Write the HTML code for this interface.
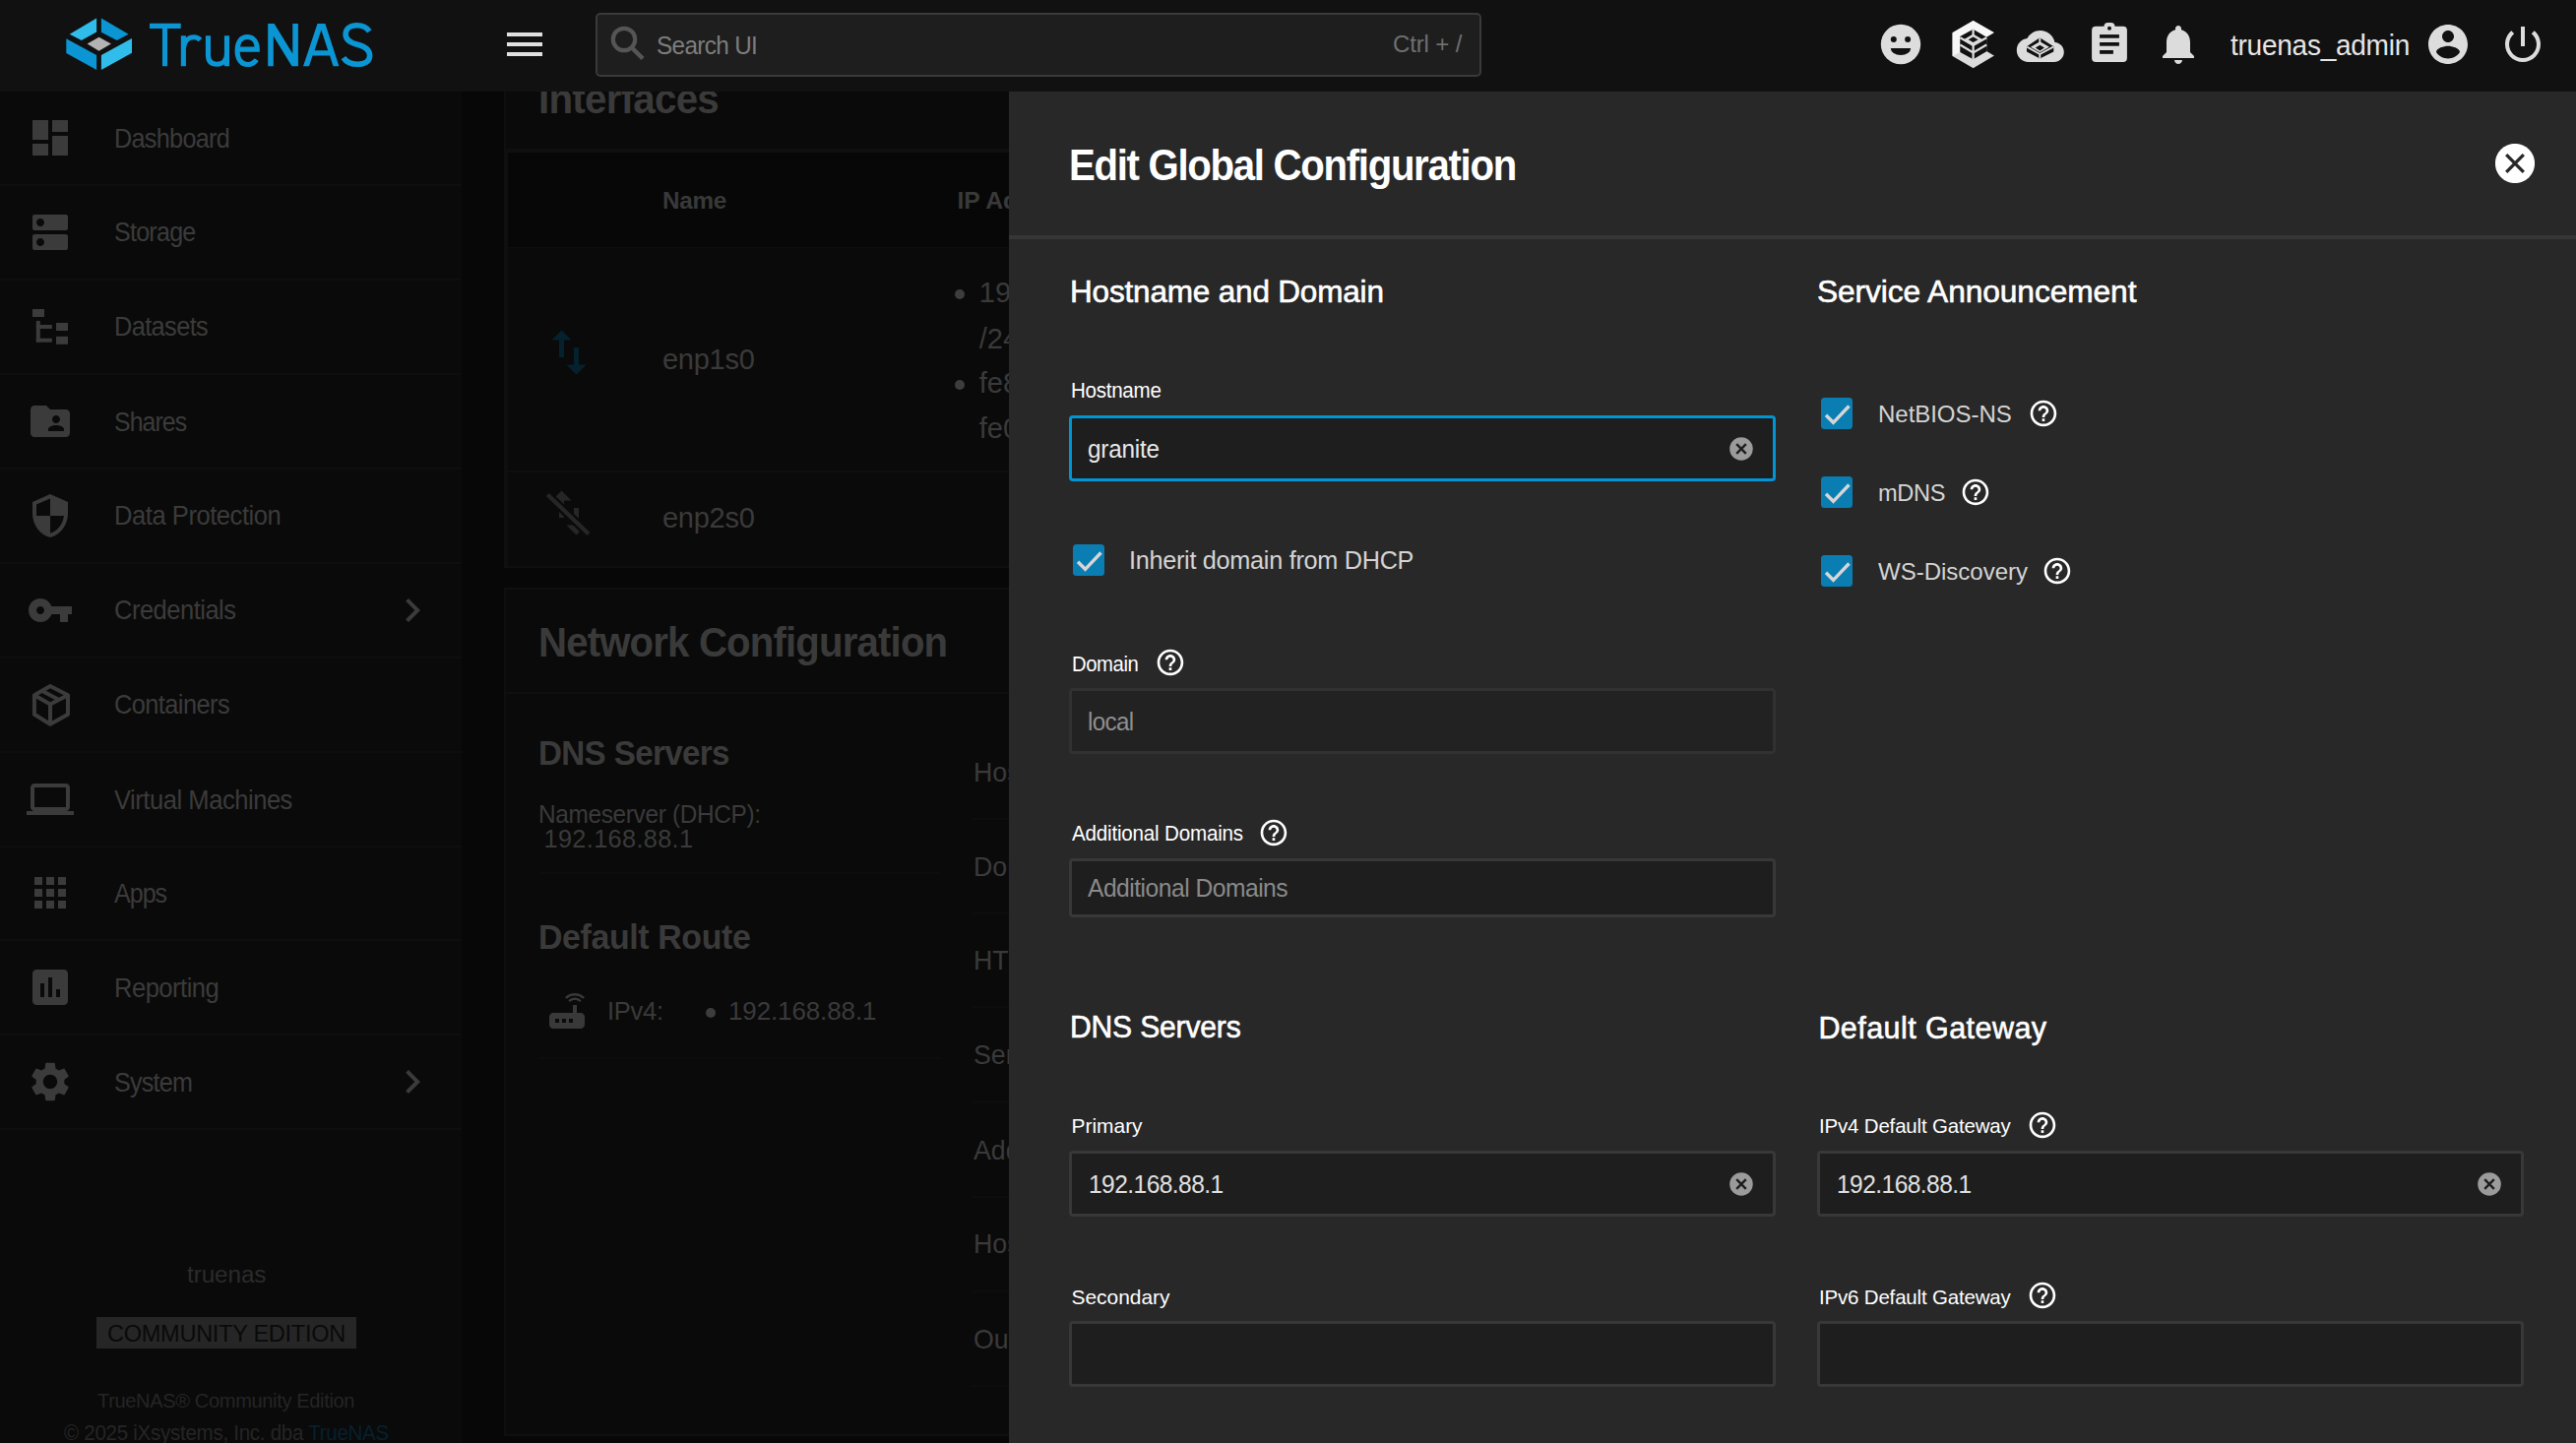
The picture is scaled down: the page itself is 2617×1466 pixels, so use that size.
<!DOCTYPE html><html><head><meta charset='utf-8'><title>TrueNAS</title><style>
html,body{margin:0;padding:0;}
body{width:2617px;height:1466px;overflow:hidden;position:relative;background:#070707;font-family:"Liberation Sans",sans-serif;}
.a{position:absolute;}
.t{position:absolute;white-space:nowrap;font-family:"Liberation Sans",sans-serif;}
.med{-webkit-text-stroke:0.6px currentColor;}
.logo{font-family:"Liberation Sans",sans-serif;color:#0b95d3;font-size:62px;line-height:62px;white-space:nowrap;}
.logo .tr{letter-spacing:-2px;}
.logo .nas{font-weight:bold;letter-spacing:-3px;margin-left:6px;}
</style></head><body><div class='a' style='left:469px;top:93px;width:556px;height:1373px;background:#070707;'></div>
<div class='a' style='left:512px;top:-100px;width:600px;height:677px;background:#0a0a0a;box-sizing:border-box;border:2px solid #0f0f0f;'></div>
<div class='a' style='left:514px;top:151px;width:600px;height:4px;background:#0f0f0f;'></div>
<div class='a' style='left:514px;top:151px;width:2px;height:424px;background:#0f0f0f;'></div>
<div class='a' style='left:516px;top:155px;width:600px;height:96px;background:#070707;'></div>
<div class='a' style='left:516px;top:251px;width:600px;height:1px;background:#0f0f0f;'></div>
<div class='a' style='left:516px;top:478px;width:600px;height:2px;background:#0f0f0f;'></div>
<svg class='a' style='left:547.50px;top:328.30px;width:60.00px;height:60.00px;' viewBox='0 0 24 24'><path fill='#05212d' d='M16 17.01V10h-2v7.01h-3L15 21l4-3.99h-3zM9 3L5 6.99h3V14h2V6.99h3L9 3z'/></svg>
<svg class='a' style='left:547.5px;top:490.5px;width:60px;height:60px' viewBox='0 0 24 24'><path fill='#262626' d='M16 17.01V10h-2v7.01h-3L15 21l4-3.99h-3zM9 3L5 6.99h3V14h2V6.99h3L9 3z'/><path d='M3.3 4.6L20 20.6' stroke='#0a0a0a' stroke-width='3.6'/><path d='M3.3 4.6L20 20.6' stroke='#262626' stroke-width='1.7'/></svg>
<div class='a' style='left:970px;top:293.5px;width:10px;height:10px;border-radius:50%;background:#3d3d3d'></div>
<div class='a' style='left:970px;top:385.5px;width:10px;height:10px;border-radius:50%;background:#3d3d3d'></div>
<div class='a' style='left:512px;top:597px;width:600px;height:862px;background:#0a0a0a;box-sizing:border-box;border:2px solid #0f0f0f;'></div>
<div class='a' style='left:514px;top:703px;width:600px;height:2px;background:#0f0f0f;'></div>
<div class='a' style='left:547px;top:886px;width:408px;height:2px;background:#0d0d0d;'></div>
<div class='a' style='left:547px;top:1074px;width:408px;height:2px;background:#0d0d0d;'></div>
<div class='a' style='left:988px;top:831px;width:100px;height:2px;background:#0d0d0d;'></div>
<div class='a' style='left:988px;top:927px;width:100px;height:2px;background:#0d0d0d;'></div>
<div class='a' style='left:988px;top:1022px;width:100px;height:2px;background:#0d0d0d;'></div>
<div class='a' style='left:988px;top:1119px;width:100px;height:2px;background:#0d0d0d;'></div>
<div class='a' style='left:988px;top:1215px;width:100px;height:2px;background:#0d0d0d;'></div>
<div class='a' style='left:988px;top:1311px;width:100px;height:2px;background:#0d0d0d;'></div>
<div class='a' style='left:988px;top:1407px;width:100px;height:2px;background:#0d0d0d;'></div>
<svg class='a' style='left:552.20px;top:1003.00px;width:48.00px;height:48.00px;' viewBox='0 0 24 24'><path fill='#393939' d='M20.2 5.9l.8-.8C19.6 3.7 17.8 3 16 3s-3.6.7-5 2.1l.8.8C13 4.8 14.5 4.2 16 4.2s3 .6 4.2 1.7zm-.9.8c-.9-.9-2.1-1.4-3.3-1.4s-2.4.5-3.3 1.4l.8.8c.7-.7 1.6-1 2.5-1 .9 0 1.8.3 2.5 1l.8-.8zM19 13h-2V9h-2v4H5c-1.1 0-2 .9-2 2v4c0 1.1.9 2 2 2h14c1.1 0 2-.9 2-2v-4c0-1.1-.9-2-2-2zM8 18H6v-2h2v2zm3.5 0h-2v-2h2v2zm3.5 0h-2v-2h2v2z'/></svg>
<div class='a' style='left:717px;top:1024px;width:10px;height:10px;border-radius:50%;background:#3d3d3d'></div>
<div class='a' style='left:0px;top:93px;width:469px;height:1373px;background:#0a0a0a;'></div>
<div class='a' style='left:0px;top:187px;width:469px;height:2px;background:#0e0e0e;'></div>
<div class='a' style='left:0px;top:283px;width:469px;height:2px;background:#0e0e0e;'></div>
<div class='a' style='left:0px;top:379px;width:469px;height:2px;background:#0e0e0e;'></div>
<div class='a' style='left:0px;top:475px;width:469px;height:2px;background:#0e0e0e;'></div>
<div class='a' style='left:0px;top:571px;width:469px;height:2px;background:#0e0e0e;'></div>
<div class='a' style='left:0px;top:667px;width:469px;height:2px;background:#0e0e0e;'></div>
<div class='a' style='left:0px;top:763px;width:469px;height:2px;background:#0e0e0e;'></div>
<div class='a' style='left:0px;top:859px;width:469px;height:2px;background:#0e0e0e;'></div>
<div class='a' style='left:0px;top:954px;width:469px;height:2px;background:#0e0e0e;'></div>
<div class='a' style='left:0px;top:1050px;width:469px;height:2px;background:#0e0e0e;'></div>
<div class='a' style='left:0px;top:1146px;width:469px;height:2px;background:#0e0e0e;'></div>
<svg class='a' style='left:27.00px;top:116.00px;width:48.00px;height:48.00px;' viewBox='0 0 24 24'><path fill='#3b3b3b' d='M3 13h8V3H3v10zm0 8h8v-6H3v6zm10 0h8V11h-8v10zm0-18v6h8V3h-8z'/></svg>
<svg class='a' style='left:27.00px;top:211.93px;width:48.00px;height:48.00px;' viewBox='0 0 24 24'><path fill='#3b3b3b' d='M20 13H4c-.55 0-1 .45-1 1v6c0 .55.45 1 1 1h16c.55 0 1-.45 1-1v-6c0-.55-.45-1-1-1zM7 19c-1.1 0-2-.9-2-2s.9-2 2-2 2 .9 2 2-.9 2-2 2zM20 3H4c-.55 0-1 .45-1 1v6c0 .55.45 1 1 1h16c.55 0 1-.45 1-1V4c0-.55-.45-1-1-1zM7 9c-1.1 0-2-.9-2-2s.9-2 2-2 2 .9 2 2-.9 2-2 2z'/></svg>
<svg class='a' style='left:27px;top:307.86px;width:48px;height:48px' viewBox='0 0 48 48'><g fill='#3b3b3b'><rect x='6' y='6' width='12' height='8'/><rect x='9.8' y='18' width='4' height='21.5'/><rect x='9.8' y='22' width='16' height='4'/><rect x='9.8' y='35.7' width='16' height='4'/><rect x='30' y='20' width='12' height='8'/><rect x='30' y='33.8' width='12' height='8'/></g></svg>
<svg class='a' style='left:27.00px;top:403.79px;width:48.00px;height:48.00px;' viewBox='0 0 24 24'><path fill='#3b3b3b' d='M20 6h-8l-2-2H4c-1.1 0-1.99.9-1.99 2L2 18c0 1.1.9 2 2 2h16c1.1 0 2-.9 2-2V8c0-1.1-.9-2-2-2zm-5 3c1.1 0 2 .9 2 2s-.9 2-2 2-2-.9-2-2 .9-2 2-2zm4 8h-8v-1c0-1.33 2.67-2 4-2s4 .67 4 2v1z'/></svg>
<svg class='a' style='left:27.00px;top:499.72px;width:48.00px;height:48.00px;' viewBox='0 0 24 24'><path fill='#3b3b3b' d='M12 1L3 5v6c0 5.55 3.84 10.74 9 12 5.160-1.26 9-6.45 9-12V5l-9-4zm0 10.99h7c-.53 4.12-3.28 7.79-7 8.93V12H5V6.3l7-3.11v8.8z'/></svg>
<svg class='a' style='left:27.00px;top:595.65px;width:48.00px;height:48.00px;' viewBox='0 0 24 24'><path fill='#3b3b3b' d='M12.65 10C11.83 7.67 9.61 6 7 6c-3.31 0-6 2.69-6 6s2.69 6 6 6c2.61 0 4.830-1.67 5.65-4H17v4h4v-4h2v-4H12.65zM7 14c-1.1 0-2-.9-2-2s.9-2 2-2 2 .9 2 2-.9 2-2 2z'/></svg>
<svg class='a' style='left:395.30px;top:595.65px;width:48.00px;height:48.00px;' viewBox='0 0 24 24'><path fill='#3b3b3b' d='M10 6L8.59 7.41 13.17 12l-4.58 4.59L10 18l6-6z'/></svg>
<svg class='a' style='left:27px;top:691.58px;width:48px;height:48px' viewBox='0 0 48 48'><g fill='none' stroke='#3b3b3b' stroke-width='4' stroke-linejoin='round'><path d='M24 5L7.9 14.2V33.7L24 43.7L42 33.7V14.2Z'/><path d='M7.9 14.2L24 23.5L42 14.2M24 23.5V43.7M15.5 9.8L33 19'/></g></svg>
<svg class='a' style='left:27.00px;top:787.51px;width:48.00px;height:48.00px;' viewBox='0 0 24 24'><path fill='#3b3b3b' d='M20 18c1.1 0 1.99-.9 1.99-2L22 6c0-1.1-.9-2-2-2H4c-1.1 0-2 .9-2 2v10c0 1.1.9 2 2 2H0v2h24v-2h-4zM4 6h16v10H4V6z'/></svg>
<svg class='a' style='left:27.00px;top:883.44px;width:48.00px;height:48.00px;' viewBox='0 0 24 24'><path fill='#3b3b3b' d='M4 8h4V4H4v4zm6 12h4v-4h-4v4zm-6 0h4v-4H4v4zm0-6h4v-4H4v4zm6 0h4v-4h-4v4zm6-10v4h4V4h-4zm-6 4h4V4h-4v4zm6 6h4v-4h-4v4zm0 6h4v-4h-4v4z'/></svg>
<svg class='a' style='left:27.00px;top:979.37px;width:48.00px;height:48.00px;' viewBox='0 0 24 24'><path fill='#3b3b3b' d='M19 3H5c-1.1 0-2 .9-2 2v14c0 1.1.9 2 2 2h14c1.1 0 2-.9 2-2V5c0-1.1-.9-2-2-2zM9 17H7v-7h2v7zm4 0h-2V7h2v10zm4 0h-2v-4h2v4z'/></svg>
<svg class='a' style='left:27.00px;top:1075.30px;width:48.00px;height:48.00px;' viewBox='0 0 24 24'><path fill='#3b3b3b' d='M19.14 12.94c.04-.3.06-.61.06-.94 0-.32-.02-.64-.07-.94l2.03-1.58c.18-.14.23-.41.12-.61l-1.92-3.32c-.12-.22-.37-.29-.59-.22l-2.39.96c-.5-.38-1.03-.7-1.62-.94l-.36-2.54c-.04-.24-.24-.41-.48-.41h-3.84c-.24 0-.43.17-.47.41l-.36 2.54c-.59.24-1.13.57-1.62.94l-2.39-.96c-.22-.08-.47 0-.59.22L2.74 8.87c-.12.21-.08.47.12.61l2.03 1.58c-.05.3-.09.63-.09.94s.02.64.07.94l-2.03 1.58c-.18.14-.23.41-.12.61l1.92 3.32c.12.22.37.29.59.22l2.39-.96c.5.38 1.03.7 1.62.94l.36 2.54c.05.24.24.41.48.41h3.84c.24 0 .44-.17.47-.41l.36-2.54c.59-.24 1.13-.56 1.62-.94l2.39.96c.22.08.47 0 .59-.22l1.92-3.32c.12-.22.07-.47-.12-.61l-2.01-1.58zM12 15.6c-1.98 0-3.6-1.62-3.6-3.6s1.62-3.6 3.6-3.6 3.6 1.62 3.6 3.6-1.62 3.6-3.6 3.6z'/></svg>
<svg class='a' style='left:395.30px;top:1075.30px;width:48.00px;height:48.00px;' viewBox='0 0 24 24'><path fill='#3b3b3b' d='M10 6L8.59 7.41 13.17 12l-4.58 4.59L10 18l6-6z'/></svg>
<div class='a' style='left:98px;top:1338px;width:264px;height:32px;background:#262626;'></div>
<div class='t ' style='left:116.00px;top:128.00px;font-size:27.04px;line-height:27.04px;color:#3b3b3b;letter-spacing:-0.746px;transform:scaleX(0.9330);transform-origin:0 0;'>Dashboard</div>
<div class='t ' style='left:116.00px;top:223.40px;font-size:27.04px;line-height:27.04px;color:#3b3b3b;letter-spacing:-0.791px;transform:scaleX(0.9257);transform-origin:0 0;'>Storage</div>
<div class='t ' style='left:116.00px;top:319.00px;font-size:27.04px;line-height:27.04px;color:#3b3b3b;letter-spacing:-0.643px;transform:scaleX(0.9373);transform-origin:0 0;'>Datasets</div>
<div class='t ' style='left:116.00px;top:415.70px;font-size:27.04px;line-height:27.04px;color:#3b3b3b;letter-spacing:-0.960px;transform:scaleX(0.9170);transform-origin:0 0;'>Shares</div>
<div class='t ' style='left:116.00px;top:511.30px;font-size:27.04px;line-height:27.04px;color:#3b3b3b;letter-spacing:-0.485px;transform:scaleX(0.9457);transform-origin:0 0;'>Data Protection</div>
<div class='t ' style='left:116.00px;top:606.90px;font-size:27.04px;line-height:27.04px;color:#3b3b3b;letter-spacing:-0.524px;transform:scaleX(0.9430);transform-origin:0 0;'>Credentials</div>
<div class='t ' style='left:116.00px;top:703.10px;font-size:27.04px;line-height:27.04px;color:#3b3b3b;letter-spacing:-0.602px;transform:scaleX(0.9384);transform-origin:0 0;'>Containers</div>
<div class='t ' style='left:116.00px;top:799.60px;font-size:27.04px;line-height:27.04px;color:#3b3b3b;letter-spacing:-0.492px;transform:scaleX(0.9450);transform-origin:0 0;'>Virtual Machines</div>
<div class='t ' style='left:116.00px;top:895.20px;font-size:27.04px;line-height:27.04px;color:#3b3b3b;letter-spacing:-1.039px;transform:scaleX(0.9249);transform-origin:0 0;'>Apps</div>
<div class='t ' style='left:116.00px;top:990.80px;font-size:27.04px;line-height:27.04px;color:#3b3b3b;letter-spacing:-0.536px;transform:scaleX(0.9456);transform-origin:0 0;'>Reporting</div>
<div class='t ' style='left:116.00px;top:1087.30px;font-size:27.04px;line-height:27.04px;color:#3b3b3b;letter-spacing:-0.846px;transform:scaleX(0.9304);transform-origin:0 0;'>System</div>
<div class='t ' style='left:190.00px;top:1283.00px;font-size:24.61px;line-height:24.61px;color:#2b2b2b;letter-spacing:-0.109px;transform:scaleX(0.9881);transform-origin:0 0;'>truenas</div>
<div class='t ' style='left:109.00px;top:1342.70px;font-size:24.27px;line-height:24.27px;color:#0a0a0a;letter-spacing:-0.308px;transform:scaleX(0.9711);transform-origin:0 0;'>COMMUNITY EDITION</div>
<div class='t ' style='left:99.00px;top:1412.00px;font-size:21.08px;line-height:21.08px;color:#252525;letter-spacing:-0.373px;transform:scaleX(0.9513);transform-origin:0 0;'>TrueNAS® Community Edition</div>
<div class='t copy' style='left:64.60px;top:1446.00px;font-size:21.37px;line-height:21.37px;color:#252525;letter-spacing:-0.281px;transform:scaleX(0.9609);transform-origin:0 0;'>© 2025 iXsystems, Inc. dba <span style="color:#06202d">TrueNAS</span></div>
<div class='t ' style='left:547.00px;top:78.70px;font-size:42.59px;line-height:42.59px;color:#3a3a3a;letter-spacing:-0.793px;transform:scaleX(0.9473);transform-origin:0 0;font-weight:bold;'>Interfaces</div>
<div class='t ' style='left:672.60px;top:192.00px;font-size:24.71px;line-height:24.71px;color:#393939;letter-spacing:-0.266px;transform:scaleX(0.9823);transform-origin:0 0;font-weight:bold;'>Name</div>
<div class='t ' style='left:972.40px;top:192.00px;font-size:24.71px;line-height:24.71px;color:#393939;letter-spacing:0.000px;font-weight:bold;'>IP Addresses</div>
<div class='t ' style='left:672.60px;top:349.50px;font-size:29.80px;line-height:29.80px;color:#3a3a3a;letter-spacing:-0.318px;transform:scaleX(0.9757);transform-origin:0 0;'>enp1s0</div>
<div class='t ' style='left:672.60px;top:511.00px;font-size:29.80px;line-height:29.80px;color:#3a3a3a;letter-spacing:-0.318px;transform:scaleX(0.9757);transform-origin:0 0;'>enp2s0</div>
<div class='t ' style='left:994.80px;top:283.30px;font-size:29.07px;line-height:29.07px;color:#3a3a3a;letter-spacing:0.000px;'>192.168.88.2</div>
<div class='t ' style='left:994.80px;top:329.90px;font-size:29.07px;line-height:29.07px;color:#3a3a3a;letter-spacing:0.000px;'>/24</div>
<div class='t ' style='left:994.80px;top:374.80px;font-size:29.07px;line-height:29.07px;color:#3a3a3a;letter-spacing:0.000px;'>fe80::5054:ff:fe12:3456</div>
<div class='t ' style='left:994.80px;top:421.30px;font-size:29.07px;line-height:29.07px;color:#3a3a3a;letter-spacing:0.000px;'>fe00::1</div>
<div class='t ' style='left:547.00px;top:631.00px;font-size:42.59px;line-height:42.59px;color:#3a3a3a;letter-spacing:-0.881px;transform:scaleX(0.9430);transform-origin:0 0;font-weight:bold;'>Network Configuration</div>
<div class='t ' style='left:547.00px;top:748.00px;font-size:34.88px;line-height:34.88px;color:#3a3a3a;letter-spacing:-0.688px;transform:scaleX(0.9516);transform-origin:0 0;font-weight:bold;'>DNS Servers</div>
<div class='t ' style='left:547.00px;top:815.40px;font-size:25.29px;line-height:25.29px;color:#3a3a3a;letter-spacing:-0.340px;transform:scaleX(0.9641);transform-origin:0 0;'>Nameserver (DHCP):</div>
<div class='t ' style='left:552.50px;top:840.00px;font-size:25.29px;line-height:25.29px;color:#3a3a3a;letter-spacing:0.357px;'>192.168.88.1</div>
<div class='t ' style='left:547.00px;top:935.00px;font-size:34.88px;line-height:34.88px;color:#3a3a3a;letter-spacing:-0.370px;transform:scaleX(0.9707);transform-origin:0 0;font-weight:bold;'>Default Route</div>
<div class='t ' style='left:616.80px;top:1014.40px;font-size:26.16px;line-height:26.16px;color:#3a3a3a;letter-spacing:-0.263px;transform:scaleX(0.9735);transform-origin:0 0;'>IPv4:</div>
<div class='t ' style='left:739.80px;top:1014.40px;font-size:26.16px;line-height:26.16px;color:#3a3a3a;letter-spacing:-0.084px;transform:scaleX(0.9909);transform-origin:0 0;'>192.168.88.1</div>
<div class='t ' style='left:989.00px;top:772.00px;font-size:26.74px;line-height:26.74px;color:#3a3a3a;letter-spacing:0.000px;'>Hostname:</div>
<div class='t ' style='left:989.00px;top:868.00px;font-size:26.74px;line-height:26.74px;color:#3a3a3a;letter-spacing:0.000px;'>Domain:</div>
<div class='t ' style='left:989.00px;top:963.00px;font-size:26.74px;line-height:26.74px;color:#3a3a3a;letter-spacing:0.000px;'>HTTP Proxy:</div>
<div class='t ' style='left:989.00px;top:1059.00px;font-size:26.74px;line-height:26.74px;color:#3a3a3a;letter-spacing:0.000px;'>Service Announcement:</div>
<div class='t ' style='left:989.00px;top:1155.60px;font-size:26.74px;line-height:26.74px;color:#3a3a3a;letter-spacing:0.000px;'>Additional Domains:</div>
<div class='t ' style='left:989.00px;top:1251.00px;font-size:26.74px;line-height:26.74px;color:#3a3a3a;letter-spacing:0.000px;'>Hostname Database:</div>
<div class='t ' style='left:989.00px;top:1347.50px;font-size:26.74px;line-height:26.74px;color:#3a3a3a;letter-spacing:0.000px;'>Outbound Network:</div>
<div class='a' style='left:0px;top:0px;width:2617px;height:93px;background:#111111;'></div>
<svg class='a' style='left:0;top:0;width:400px;height:93px' viewBox='0 0 400 93'>
<polygon fill='#31bdeb' points='98.1,18.5 98.1,32.6 82.8,41.05 70.7,34.7'/>
<polygon fill='#0b95d3' points='102.9,18.5 130.6,34.7 118.7,41.05 102.9,32.8'/>
<polygon fill='#0b95d3' points='67.3,39.35 98.1,56.1 98.1,70.9 67.3,53.9'/>
<polygon fill='#31bdeb' points='134,39.1 134,53.7 102.9,70.9 102.9,56.1'/>
<polygon fill='#b3b3b3' points='88.6,44.45 100.5,37.65 112.9,44.45 100.5,51.7'/>
<g fill='none' stroke='#0b95d3' stroke-width='5.1'>
<path d='M152 26.35H183.7M167.5 26.35V67.2'/>
<path d='M186.35 36.2V67.2M186.35 49C187.2 41 192 37.7 197 37.7C199.8 37.7 201.6 38.6 203.4 40.6'/>
<path d='M211.45 36.2V55.5C211.45 62.5 214.8 65.2 220.3 65.2C226.5 65.2 230.45 61 230.45 54.5M230.45 36.2V67.2'/>
<path d='M241.1 50.1H261.3C261.3 42 257 37.55 251.2 37.55C245 37.55 241.1 42.5 241.1 51.5C241.1 60.5 245.5 65.55 251.5 65.55C255.5 65.55 258.6 63.6 260.7 60.6'/>
</g>
<g fill='#0b95d3'>
<polygon points='272.2,67.2 272.2,24 278.6,24 297.3,54.5 297.3,24 302.9,24 302.9,67.2 296.5,67.2 277.8,36.8 277.8,67.2'/>
<path fill-rule='evenodd' d='M308 67.2L322.5 24H330.4L344.4 67.2H338.5L335.1 56.5H317.5L314 67.2ZM319.6 51.3H333.2L326.4 30.5Z'/>
</g>
<path fill='none' stroke='#0b95d3' stroke-width='5.6' d='M375.3 31.8C372.3 27.6 367.8 25.8 362.6 25.8C355.8 25.8 351.1 29.3 351.1 35C351.1 41.3 356.6 43.6 363.2 45.3C370.6 47.2 375.6 50 375.6 56.6C375.6 62.6 370.6 65.3 363.1 65.3C356.6 65.3 351.5 62.6 348.9 58.6'/>
</svg>
<div class='a' style='left:515px;top:33px;width:36px;height:4px;background:#e0e0e0;'></div>
<div class='a' style='left:515px;top:43px;width:36px;height:4px;background:#e0e0e0;'></div>
<div class='a' style='left:515px;top:53px;width:36px;height:4px;background:#e0e0e0;'></div>
<div class='a' style='left:605px;top:13px;width:900px;height:65px;box-sizing:border-box;border:2px solid #3a3a3a;border-radius:5px;background:#1e1e1e'></div>
<svg class='a' style='left:614px;top:25px;width:48px;height:48px' viewBox='0 0 48 48'><circle cx='20' cy='15' r='11.2' fill='none' stroke='#555' stroke-width='4.2'/><path d='M28 23.5L39 34.5' stroke='#555' stroke-width='4.5'/></svg>
<svg class='a' style='left:1900px;top:15px;width:700px;height:60px' viewBox='1900 15 700 60'>
<circle cx='1931' cy='45' r='20.2' fill='#dddddd'/>
<circle cx='1923.8' cy='39.9' r='3' fill='#111'/><circle cx='1938.1' cy='39.9' r='3' fill='#111'/>
<path d='M1920.8 49.1h20.4a10.2 7 0 0 1 -20.4 0z' fill='#111'/>
</svg>
<svg class='a' style='left:1970px;top:15px;width:200px;height:60px' viewBox='1970 15 200 60'>
<polygon fill='#dcdcdc' points='2004.6,21.1 2026,33.3 2026,56.6 2004.6,69.2 1983.6,57 1983.6,33.3'/>
<polygon fill='#f7f7f7' points='2004.6,21.1 2026,33.3 2018.2,37.8 2004.6,29.7 1991.3,37 1991.3,52.9 1983.6,57 1983.6,33.3'/>
<polygon fill='#111' points='2018.2,37.8 2027,32.5 2027,57.2 2018.2,52.1'/>
<polygon fill='#111' points='2004.6,29.7 1991.3,37 1991.3,52.9 2004.6,60.2 2018.2,52.3 2018.2,37.8'/>
<g stroke='#dcdcdc' stroke-width='2.3' fill='none'>
<path d='M2004.6 29.7V60.2'/>
<path d='M1991.3 38.3L2004.6 46L2018.2 38.3'/>
<path d='M1991.3 45.6L2004.6 53.4L2018.2 45.6'/>
</g>
<polygon fill='#dcdcdc' points='2004.6,34.4 2014.3,40.2 2004.6,45.9 1994.9,40.2'/>
<polygon fill='#111' points='2004.6,37.4 2009.6,40.25 2004.6,43.1 1999.7,40.25'/>
<g transform='translate(2048.8,22.9) scale(2)'><path fill='#dcdcdc' d='M19.35 10.04C18.670 6.59 15.64 4 12 4 9.11 4 6.6 5.64 5.35 8.04 2.34 8.36 0 10.91 0 14c0 3.31 2.69 6 6 6h13c2.76 0 5-2.24 5-5 0-2.64-2.05-4.78-4.65-4.960z'/></g>
<polygon fill='#111' points='2059,47.2 2072.3,38.2 2086.3,47.2 2086.3,52.4 2072.3,59.6 2059,52.4'/>
<g stroke='#dcdcdc' stroke-width='1.9' fill='none'>
<path d='M2059.3 47.6L2072.3 55L2086 47.6M2072.3 55V59.6M2072.3 38.2V43'/>
</g>
<polygon fill='#dcdcdc' points='2072.4,42.2 2081.9,47.7 2072.4,53.3 2062.9,47.7'/>
<polygon fill='#111' points='2072.4,45.8 2077.0,48.6 2072.4,51.4 2067.8,48.6'/>
<rect x='2125.1' y='26.8' width='35.8' height='36.1' rx='4' fill='#dcdcdc'/>
<rect x='2137.5' y='23' width='11' height='8' rx='4' fill='#dcdcdc'/>
<circle cx='2143' cy='28.8' r='2' fill='#111'/>
<rect x='2133.1' y='35.1' width='19.8' height='3.6' fill='#111'/>
<rect x='2133.1' y='43' width='19.8' height='3.7' fill='#111'/>
<rect x='2133.1' y='51' width='13.8' height='3.8' fill='#111'/>
</svg>
<svg class='a' style='left:2188.70px;top:21.00px;width:48.00px;height:48.00px;' viewBox='0 0 24 24'><path fill='#dcdcdc' d='M12 22c1.1 0 2-.9 2-2h-4c0 1.1.89 2 2 2zm6-6v-5c0-3.07-1.64-5.64-4.5-6.32V4c0-.83-.67-1.5-1.5-1.5s-1.5.67-1.5 1.5v.68C7.63 5.36 6 7.92 6 11v5l-2 2v1h16v-1l-2-2z'/></svg>
<svg class='a' style='left:2463.00px;top:20.90px;width:48.00px;height:48.00px;' viewBox='0 0 24 24'><path fill='#dcdcdc' d='M12 2C6.48 2 2 6.48 2 12s4.48 10 10 10 10-4.48 10-10S17.52 2 12 2zm0 3c1.66 0 3 1.34 3 3s-1.34 3-3 3-3-1.34-3-3 1.34-3 3-3zm0 14.2c-2.5 0-4.71-1.28-6-3.22.03-1.99 4-3.08 6-3.08 1.99 0 5.97 1.09 6 3.08-1.29 1.94-3.5 3.22-6 3.22z'/></svg>
<svg class='a' style='left:2539.10px;top:20.90px;width:48.00px;height:48.00px;' viewBox='0 0 24 24'><path fill='#dcdcdc' d='M13 3h-2v10h2V3zm4.83 2.17l-1.42 1.42C17.99 7.86 19 9.81 19 12c0 3.87-3.13 7-7 7s-7-3.13-7-7c0-2.19 1.01-4.14 2.58-5.42L6.17 5.17C4.23 6.82 3 9.26 3 12c0 4.97 4.03 9 9 9s9-4.03 9-9c0-2.74-1.23-5.18-3.17-6.83z'/></svg>
<div class='t ' style='left:667.40px;top:32.60px;font-size:26.16px;line-height:26.16px;color:#7d7d7d;letter-spacing:-0.696px;transform:scaleX(0.9289);transform-origin:0 0;'>Search UI</div>
<div class='t ' style='left:1414.80px;top:32.90px;font-size:24.42px;line-height:24.42px;color:#6f6f6f;letter-spacing:-0.121px;transform:scaleX(0.9825);transform-origin:0 0;'>Ctrl + /</div>
<div class='t ' style='left:2265.90px;top:31.90px;font-size:28.77px;line-height:28.77px;color:#e6e6e6;letter-spacing:-0.272px;transform:scaleX(0.9744);transform-origin:0 0;'>truenas_admin</div>
<div class='a' style='left:1025px;top:93px;width:1592px;height:1373px;background:#282828;'></div>
<div class='a' style='left:1025px;top:239px;width:1592px;height:4px;background:#363636;'></div>
<svg class='a' style='left:2535px;top:146px;width:40px;height:40px' viewBox='0 0 40 40'><circle cx='20' cy='20' r='20.1' fill='#fff'/><path d='M11.2 11.2L28.8 28.8M28.8 11.2L11.2 28.8' stroke='#282828' stroke-width='3.3'/></svg>
<div class='a' style='left:1086px;top:422px;width:718px;height:67px;box-sizing:border-box;border:3px solid #0095d5;border-radius:4px;background:#1e1e1e'></div>
<svg class='a' style='left:1757px;top:444px;width:24px;height:24px' viewBox='0 0 24 24'><circle cx='12' cy='12' r='11.8' fill='#9b9b9b'/><path d='M7.2 7.2L16.8 16.8M16.8 7.2L7.2 16.8' stroke='#1e1e1e' stroke-width='2.4'/></svg>
<svg class='a' style='left:1090px;top:552.6px;width:32px;height:32px' viewBox='0 0 32 32'><rect width='32' height='32' rx='3.5' fill='#0a7db2'/><path d='M5 17.7L12.5 25.3L28.5 8.5' fill='none' stroke='#d6d6d6' stroke-width='3.4'/></svg>
<svg class='a' style='left:1172.84px;top:657.34px;width:31.92px;height:31.92px;' viewBox='0 0 24 24'><path fill='#ffffff' d='M11 18h2v-2h-2v2zm1-16C6.48 2 2 6.48 2 12s4.48 10 10 10 10-4.48 10-10S17.52 2 12 2zm0 18c-4.41 0-8-3.59-8-8s3.59-8 8-8 8 3.59 8 8-3.59 8-8 8zm0-14c-2.21 0-4 1.79-4 4h2c0-1.1.9-2 2-2s2 .9 2 2c0 2-3 1.75-3 5h2c0-2.25 3-2.5 3-5 0-2.21-1.79-4-4-4z'/></svg>
<div class='a' style='left:1086px;top:699px;width:718px;height:67px;box-sizing:border-box;border:3px solid #313131;border-radius:4px;background:#222222'></div>
<svg class='a' style='left:1278.34px;top:830.34px;width:31.92px;height:31.92px;' viewBox='0 0 24 24'><path fill='#ffffff' d='M11 18h2v-2h-2v2zm1-16C6.48 2 2 6.48 2 12s4.48 10 10 10 10-4.48 10-10S17.52 2 12 2zm0 18c-4.41 0-8-3.59-8-8s3.59-8 8-8 8 3.59 8 8-3.59 8-8 8zm0-14c-2.21 0-4 1.79-4 4h2c0-1.1.9-2 2-2s2 .9 2 2c0 2-3 1.75-3 5h2c0-2.25 3-2.5 3-5 0-2.21-1.79-4-4-4z'/></svg>
<div class='a' style='left:1086px;top:872px;width:718px;height:60px;box-sizing:border-box;border:3px solid #383838;border-radius:4px;background:#1e1e1e'></div>
<svg class='a' style='left:1850px;top:404px;width:32px;height:32px' viewBox='0 0 32 32'><rect width='32' height='32' rx='3.5' fill='#0a7db2'/><path d='M5 17.7L12.5 25.3L28.5 8.5' fill='none' stroke='#d6d6d6' stroke-width='3.4'/></svg>
<svg class='a' style='left:2059.84px;top:404.34px;width:31.92px;height:31.92px;' viewBox='0 0 24 24'><path fill='#ffffff' d='M11 18h2v-2h-2v2zm1-16C6.48 2 2 6.48 2 12s4.48 10 10 10 10-4.48 10-10S17.52 2 12 2zm0 18c-4.41 0-8-3.59-8-8s3.59-8 8-8 8 3.59 8 8-3.59 8-8 8zm0-14c-2.21 0-4 1.79-4 4h2c0-1.1.9-2 2-2s2 .9 2 2c0 2-3 1.75-3 5h2c0-2.25 3-2.5 3-5 0-2.21-1.79-4-4-4z'/></svg>
<svg class='a' style='left:1850px;top:484px;width:32px;height:32px' viewBox='0 0 32 32'><rect width='32' height='32' rx='3.5' fill='#0a7db2'/><path d='M5 17.7L12.5 25.3L28.5 8.5' fill='none' stroke='#d6d6d6' stroke-width='3.4'/></svg>
<svg class='a' style='left:1990.84px;top:484.34px;width:31.92px;height:31.92px;' viewBox='0 0 24 24'><path fill='#ffffff' d='M11 18h2v-2h-2v2zm1-16C6.48 2 2 6.48 2 12s4.48 10 10 10 10-4.48 10-10S17.52 2 12 2zm0 18c-4.41 0-8-3.59-8-8s3.59-8 8-8 8 3.59 8 8-3.59 8-8 8zm0-14c-2.21 0-4 1.79-4 4h2c0-1.1.9-2 2-2s2 .9 2 2c0 2-3 1.75-3 5h2c0-2.25 3-2.5 3-5 0-2.21-1.79-4-4-4z'/></svg>
<svg class='a' style='left:1850px;top:564px;width:32px;height:32px' viewBox='0 0 32 32'><rect width='32' height='32' rx='3.5' fill='#0a7db2'/><path d='M5 17.7L12.5 25.3L28.5 8.5' fill='none' stroke='#d6d6d6' stroke-width='3.4'/></svg>
<svg class='a' style='left:2074.34px;top:564.34px;width:31.92px;height:31.92px;' viewBox='0 0 24 24'><path fill='#ffffff' d='M11 18h2v-2h-2v2zm1-16C6.48 2 2 6.48 2 12s4.48 10 10 10 10-4.48 10-10S17.52 2 12 2zm0 18c-4.41 0-8-3.59-8-8s3.59-8 8-8 8 3.59 8 8-3.59 8-8 8zm0-14c-2.21 0-4 1.79-4 4h2c0-1.1.9-2 2-2s2 .9 2 2c0 2-3 1.75-3 5h2c0-2.25 3-2.5 3-5 0-2.21-1.79-4-4-4z'/></svg>
<div class='a' style='left:1086px;top:1169px;width:718px;height:67px;box-sizing:border-box;border:3px solid #383838;border-radius:4px;background:#1e1e1e'></div>
<svg class='a' style='left:1757px;top:1191px;width:24px;height:24px' viewBox='0 0 24 24'><circle cx='12' cy='12' r='11.8' fill='#9b9b9b'/><path d='M7.2 7.2L16.8 16.8M16.8 7.2L7.2 16.8' stroke='#1e1e1e' stroke-width='2.4'/></svg>
<div class='a' style='left:1086px;top:1342px;width:718px;height:67px;box-sizing:border-box;border:3px solid #383838;border-radius:4px;background:#1e1e1e'></div>
<svg class='a' style='left:2058.84px;top:1127.34px;width:31.92px;height:31.92px;' viewBox='0 0 24 24'><path fill='#ffffff' d='M11 18h2v-2h-2v2zm1-16C6.48 2 2 6.48 2 12s4.48 10 10 10 10-4.48 10-10S17.52 2 12 2zm0 18c-4.41 0-8-3.59-8-8s3.59-8 8-8 8 3.59 8 8-3.59 8-8 8zm0-14c-2.21 0-4 1.79-4 4h2c0-1.1.9-2 2-2s2 .9 2 2c0 2-3 1.75-3 5h2c0-2.25 3-2.5 3-5 0-2.21-1.79-4-4-4z'/></svg>
<div class='a' style='left:1846px;top:1169px;width:718px;height:67px;box-sizing:border-box;border:3px solid #383838;border-radius:4px;background:#1e1e1e'></div>
<svg class='a' style='left:2517px;top:1191px;width:24px;height:24px' viewBox='0 0 24 24'><circle cx='12' cy='12' r='11.8' fill='#9b9b9b'/><path d='M7.2 7.2L16.8 16.8M16.8 7.2L7.2 16.8' stroke='#1e1e1e' stroke-width='2.4'/></svg>
<svg class='a' style='left:2058.84px;top:1300.34px;width:31.92px;height:31.92px;' viewBox='0 0 24 24'><path fill='#ffffff' d='M11 18h2v-2h-2v2zm1-16C6.48 2 2 6.48 2 12s4.48 10 10 10 10-4.48 10-10S17.52 2 12 2zm0 18c-4.41 0-8-3.59-8-8s3.59-8 8-8 8 3.59 8 8-3.59 8-8 8zm0-14c-2.21 0-4 1.79-4 4h2c0-1.1.9-2 2-2s2 .9 2 2c0 2-3 1.75-3 5h2c0-2.25 3-2.5 3-5 0-2.21-1.79-4-4-4z'/></svg>
<div class='a' style='left:1846px;top:1342px;width:718px;height:67px;box-sizing:border-box;border:3px solid #383838;border-radius:4px;background:#1e1e1e'></div>
<div class='t ' style='left:1086.00px;top:145.50px;font-size:44.33px;line-height:44.33px;color:#ffffff;letter-spacing:-1.429px;transform:scaleX(0.9058);transform-origin:0 0;font-weight:bold;'>Edit Global Configuration</div>
<div class='t med' style='left:1086.80px;top:280.40px;font-size:31.98px;line-height:31.98px;color:#ffffff;letter-spacing:-0.180px;transform:scaleX(0.9852);transform-origin:0 0;'>Hostname and Domain</div>
<div class='t med' style='left:1846.40px;top:280.00px;font-size:31.98px;line-height:31.98px;color:#ffffff;letter-spacing:-0.091px;transform:scaleX(0.9921);transform-origin:0 0;'>Service Announcement</div>
<div class='t ' style='left:1088.00px;top:386.30px;font-size:21.22px;line-height:21.22px;color:#ffffff;letter-spacing:-0.283px;transform:scaleX(0.9695);transform-origin:0 0;'>Hostname</div>
<div class='t ' style='left:1105.30px;top:443.70px;font-size:24.98px;line-height:24.98px;color:#e8e8e8;letter-spacing:-0.223px;transform:scaleX(0.9739);transform-origin:0 0;'>granite</div>
<div class='t ' style='left:1146.90px;top:556.00px;font-size:26.16px;line-height:26.16px;color:#d4d4d4;letter-spacing:-0.306px;transform:scaleX(0.9658);transform-origin:0 0;'>Inherit domain from DHCP</div>
<div class='t ' style='left:1088.50px;top:663.70px;font-size:21.22px;line-height:21.22px;color:#ffffff;letter-spacing:-0.438px;transform:scaleX(0.9555);transform-origin:0 0;'>Domain</div>
<div class='t ' style='left:1105.00px;top:720.00px;font-size:26.16px;line-height:26.16px;color:#8f8f8f;letter-spacing:-0.681px;transform:scaleX(0.9250);transform-origin:0 0;'>local</div>
<div class='t ' style='left:1088.50px;top:836.40px;font-size:21.22px;line-height:21.22px;color:#ffffff;letter-spacing:-0.208px;transform:scaleX(0.9711);transform-origin:0 0;'>Additional Domains</div>
<div class='t ' style='left:1105.00px;top:889.00px;font-size:26.16px;line-height:26.16px;color:#8a8a8a;letter-spacing:-0.527px;transform:scaleX(0.9409);transform-origin:0 0;'>Additional Domains</div>
<div class='t ' style='left:1907.60px;top:408.80px;font-size:24.13px;line-height:24.13px;color:#d4d4d4;letter-spacing:-0.042px;transform:scaleX(0.9958);transform-origin:0 0;'>NetBIOS-NS</div>
<div class='t ' style='left:1907.60px;top:488.80px;font-size:24.13px;line-height:24.13px;color:#d4d4d4;letter-spacing:-0.337px;transform:scaleX(0.9787);transform-origin:0 0;'>mDNS</div>
<div class='t ' style='left:1907.60px;top:568.80px;font-size:24.13px;line-height:24.13px;color:#d4d4d4;letter-spacing:-0.028px;transform:scaleX(0.9970);transform-origin:0 0;'>WS-Discovery</div>
<div class='t med' style='left:1086.90px;top:1028.00px;font-size:30.52px;line-height:30.52px;color:#ffffff;letter-spacing:-0.173px;transform:scaleX(0.9854);transform-origin:0 0;'>DNS Servers</div>
<div class='t med' style='left:1847.40px;top:1029.00px;font-size:30.52px;line-height:30.52px;color:#ffffff;letter-spacing:0.436px;'>Default Gateway</div>
<div class='t ' style='left:1088.50px;top:1134.00px;font-size:20.93px;line-height:20.93px;color:#ffffff;letter-spacing:0.000px;'>Primary</div>
<div class='t ' style='left:1106.00px;top:1190.00px;font-size:26.16px;line-height:26.16px;color:#e0e0e0;letter-spacing:-0.582px;transform:scaleX(0.9377);transform-origin:0 0;'>192.168.88.1</div>
<div class='t ' style='left:1088.50px;top:1307.60px;font-size:20.93px;line-height:20.93px;color:#ffffff;letter-spacing:0.000px;'>Secondary</div>
<div class='t ' style='left:1848.40px;top:1134.00px;font-size:20.93px;line-height:20.93px;color:#ffffff;letter-spacing:-0.162px;transform:scaleX(0.9773);transform-origin:0 0;'>IPv4 Default Gateway</div>
<div class='t ' style='left:1866.00px;top:1190.00px;font-size:26.16px;line-height:26.16px;color:#e0e0e0;letter-spacing:-0.582px;transform:scaleX(0.9377);transform-origin:0 0;'>192.168.88.1</div>
<div class='t ' style='left:1848.40px;top:1307.60px;font-size:20.93px;line-height:20.93px;color:#ffffff;letter-spacing:-0.162px;transform:scaleX(0.9773);transform-origin:0 0;'>IPv6 Default Gateway</div></body></html>
